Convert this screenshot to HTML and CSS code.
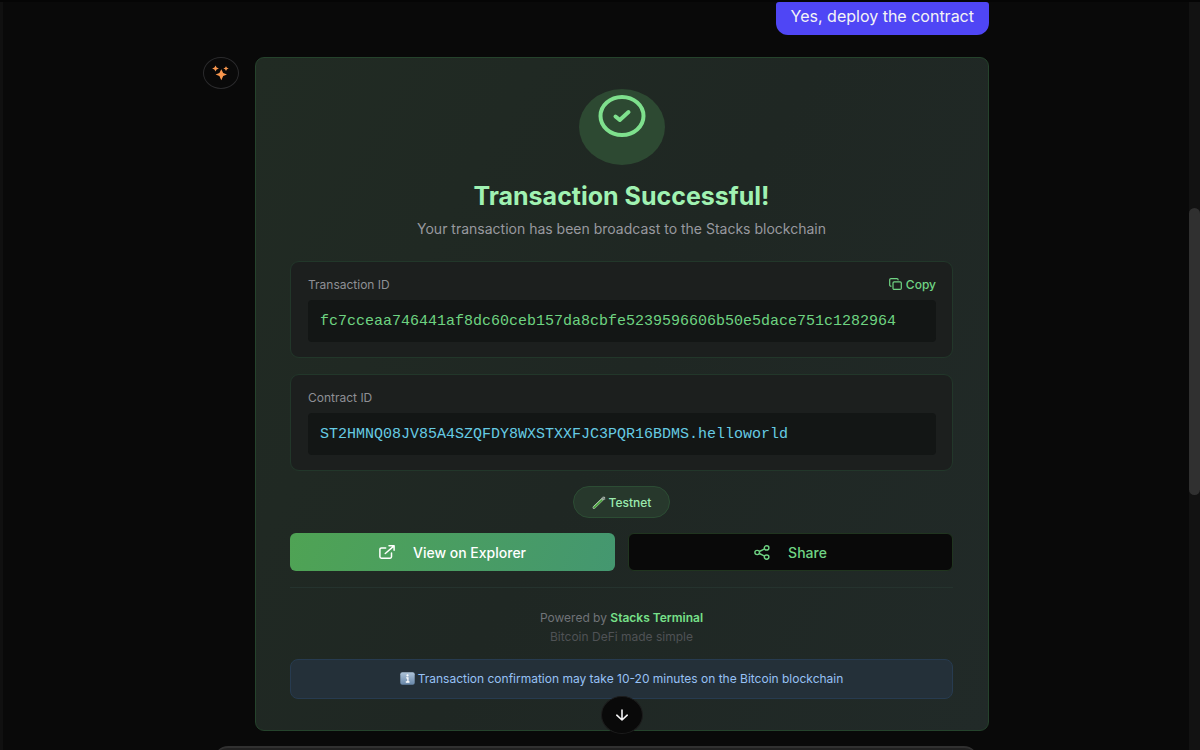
FILE: index.html
```html
<!DOCTYPE html>
<html lang="en">
<head>
<meta charset="utf-8">
<meta name="viewport" content="width=device-width, initial-scale=1">
<title>Stacks Terminal</title>
<link rel="stylesheet" href="styles.css">
</head>
<body>
<div class="app">
  <div class="edge"></div>
  <main class="chat">
    <div class="thread">
      <div class="message-user">Yes, deploy the contract</div>
      <div class="message-assistant">
        <div class="avatar">
          <svg width="18" height="16" viewBox="0 0 18 16" fill="#f9974e" aria-hidden="true">
            <path d="M9.300 4.200 11.200 8 15 9.500 11.200 11 9.300 15.200 7.400 11 3.600 9.500 7.400 8Z"/>
            <path d="M3.500.6 4.600 2.500 6.900 3.500 4.600 4.500 3.500 6.500 2.400 4.500.1 3.500 2.400 2.500Z"/>
            <path d="M14 1.200 14.900 2.700 16.700 3.500 14.900 4.300 14 5.900 13.100 4.300 11.300 3.500 13.100 2.700Z"/>
          </svg>
        </div>
        <section class="card">
          <div class="success-mark">
            <svg width="48" height="42" viewBox="0 0 48 42" fill="none" stroke="#7ee08d" stroke-width="4" stroke-linecap="round" stroke-linejoin="round" aria-hidden="true">
              <ellipse cx="24" cy="21" rx="21.500" ry="19"/>
              <path d="m17.500 21.500 4.300 3.500 8.700-8"/>
            </svg>
          </div>
          <h1 class="title">Transaction Successful!</h1>
          <p class="subtitle">Your transaction has been broadcast to the Stacks blockchain</p>

          <div class="fields">
            <div class="field">
              <div class="field-head">
                <span class="field-label">Transaction ID</span>
                <button class="copy" type="button">
                  <svg width="13" height="12" viewBox="0 0 13 12" fill="none" stroke="currentColor" stroke-width="1.200" stroke-linejoin="round" stroke-linecap="round" aria-hidden="true">
                    <rect x="4" y="3.800" width="8.300" height="7.600" rx="1.200"/>
                    <path d="M2 8.200C1.200 8.200.7 7.700.7 7V1.800C.7 1.100 1.200.6 2 .6h5.900c.7 0 1.200.5 1.200 1.200"/>
                  </svg>
                  Copy
                </button>
              </div>
              <code class="value value-tx">fc7cceaa746441af8dc60ceb157da8cbfe5239596606b50e5dace751c1282964</code>
            </div>

            <div class="field">
              <div class="field-head"><span class="field-label">Contract ID</span></div>
              <code class="value value-contract">ST2HMNQ08JV85A4SZQFDY8WXSTXXFJC3PQR16BDMS.helloworld</code>
            </div>
          </div>

          <div class="network">
            <svg width="14" height="13" viewBox="0 0 14 13" fill="none" stroke-linecap="round" aria-hidden="true">
              <path d="M2 11.500 11.800 2" stroke="#a9b5ad" stroke-width="2.800"/>
              <path d="M2.200 11.300 9.600 4.200" stroke="#49a53b" stroke-width="1.900"/>
              <path d="M10.300 1.300 12.700 3.300" stroke="#7b8880" stroke-width="1.200"/>
              <path d="M1.800 10.300 9.500 3" stroke="#d5e2d6" stroke-width=".6"/>
            </svg>
            Testnet
          </div>

          <div class="actions">
            <a class="action action-primary" href="#explorer">
              <svg width="16" height="14" viewBox="0 0 16 14" fill="none" stroke="currentColor" stroke-width="1.500" stroke-linecap="round" stroke-linejoin="round" aria-hidden="true">
                <path d="M12.500 8v3.800c0 .8-.6 1.400-1.400 1.400H2.400c-.9 0-1.500-.6-1.500-1.400V4.400C.9 3.600 1.500 3 2.400 3h4.300M10 .8h5.100v4.500M6.300 8.500 15 .9"/>
              </svg>
              View on Explorer
            </a>
            <button class="action action-secondary" type="button">
              <svg width="16" height="15" viewBox="0 0 16 15" fill="none" stroke="currentColor" stroke-width="1.400" aria-hidden="true">
                <ellipse cx="12.600" cy="2.900" rx="2.300" ry="2.100"/>
                <ellipse cx="3.200" cy="7.500" rx="2.300" ry="2.100"/>
                <ellipse cx="12.600" cy="12.100" rx="2.300" ry="2.100"/>
                <path d="m5.300 6.500 5.300-2.600M5.300 8.500l5.300 2.600"/>
              </svg>
              Share
            </button>
          </div>

          <footer class="credits">
            <p class="powered">Powered by <strong>Stacks Terminal</strong></p>
            <p class="tagline">Bitcoin DeFi made simple</p>
          </footer>

          <div class="notice">
            <svg width="15" height="13" viewBox="0 0 15 13" aria-hidden="true">
              <defs><linearGradient id="tile" x1="0" y1="0" x2="0" y2="1"><stop stop-color="#afc4d9"/><stop offset="1" stop-color="#6685a7"/></linearGradient></defs>
              <rect x=".3" y=".2" width="14.400" height="12.600" rx="2" fill="url(#tile)"/>
              <circle cx="7.500" cy="3.400" r="1.100" fill="#fff"/>
              <path d="M6.200 5.800h1.700v4M5.800 10h3.700" fill="none" stroke="#fff" stroke-width="1.300"/>
            </svg>
            Transaction confirmation may take 10-20 minutes on the Bitcoin blockchain
          </div>

          <button class="scroll-down" type="button" aria-label="Scroll to bottom">
            <svg width="14" height="12" viewBox="0 0 14 12" fill="none" stroke="currentColor" stroke-width="1.600" stroke-linecap="round" stroke-linejoin="round" aria-hidden="true">
              <path d="M7 1v10M1.800 6.200 7 11l5.200-4.800"/>
            </svg>
          </button>
        </section>
      </div>
      <div class="composer"></div>
    </div>
  </main>
  <div class="scrollbar"><div class="thumb"></div></div>
</div>
</body>
</html>
```
FILE: styles.css
```css
* { box-sizing: border-box; }

body {
  margin: 0;
  background: #090909;
  color: #f4f4f5;
  font-family: Inter, "Liberation Sans", sans-serif;
}

h1, p { margin: 0; font-weight: 400; }
svg { display: block; flex: none; }
button { font: inherit; cursor: pointer; }

.app {
  display: flex;
  height: 100vh;
  overflow: hidden;
  border-top: 2px solid #050505;
}
.edge { width: 3px; background: #101010; }
.chat { flex: 1; min-width: 0; overflow: hidden; }

.thread {
  display: flex;
  flex-direction: column;
  max-width: 786px;
  margin: 0 auto;
}

.message-user {
  align-self: flex-end;
  padding: 4px 15px 9px;
  border-radius: 3px 3px 12px 12px;
  background: #4f46f5;
  font-size: 16px;
  line-height: 20px;
}

.message-assistant {
  display: flex;
  align-items: flex-start;
  gap: 16px;
  margin-top: 22px;
}

.avatar {
  display: grid;
  place-items: center;
  flex: none;
  width: 36px;
  height: 32px;
  border: 1px solid #2b2b2d;
  border-radius: 50%;
}

.card {
  position: relative;
  flex: 1;
  min-width: 0;
  display: flex;
  flex-direction: column;
  padding: 31px 35px 31px 34px;
  border: 1px solid #25432c;
  border-radius: 9px;
  background: linear-gradient(120deg, #212b23, #1f2723 50%, #212a28);
}

.success-mark {
  align-self: center;
  width: 86px;
  height: 76px;
  padding-top: 6px;
  border-radius: 50%;
  background: #2d4932;
}
.success-mark svg { margin: 0 auto; }

.title {
  margin-top: 16px;
  color: #a0f2b2;
  font-size: 25px;
  font-weight: 700;
  line-height: 30px;
  text-align: center;
}
.subtitle {
  margin: 8px 0 22px;
  color: #98999f;
  font-size: 14px;
  line-height: 20px;
  text-align: center;
}

.fields {
  display: flex;
  flex-direction: column;
  gap: 16px;
  margin-bottom: 15px;
}
.field {
  padding: 13px 16px 15px 17px;
  border: 1px solid #22372a;
  border-radius: 9px;
  background: #1c1f1e;
}
.field-head {
  display: flex;
  justify-content: space-between;
  align-items: center;
  height: 18px;
  margin-bottom: 7px;
  color: #8e8f95;
  font-size: 12px;
}
.copy {
  display: flex;
  align-items: center;
  gap: 4px;
  padding: 0;
  border: 0;
  background: none;
  color: #70d484;
  font-weight: 500;
}
.value {
  display: block;
  padding: 12px 12px 10px;
  border-radius: 4px;
  background: #131615;
  font-family: "Liberation Mono", monospace;
  font-size: 15px;
  line-height: 20px;
  overflow-wrap: anywhere;
}
.value-tx { color: #6ed381; }
.value-contract { color: #66cbe3; }

.network {
  align-self: center;
  display: flex;
  align-items: center;
  gap: 3px;
  height: 32px;
  padding: 0 18px;
  border: 1px solid #2c4d34;
  border-radius: 16px;
  background: #27382c;
  color: #9beaae;
  font-size: 12px;
  font-weight: 500;
}

.actions {
  display: grid;
  grid-template-columns: 1fr 1fr;
  gap: 13px;
  margin-top: 15px;
}
.action {
  display: flex;
  align-items: center;
  justify-content: center;
  gap: 18px;
  height: 38px;
  border: 0;
  border-radius: 6px;
  font-size: 14px;
  font-weight: 500;
  text-decoration: none;
}
.action-primary {
  background: linear-gradient(110deg, #4fa354, #449770);
  color: #fff;
}
.action-secondary {
  border: 1px solid #20351f;
  background: #090909;
  color: #70d484;
}

.credits {
  margin-top: 16px;
  padding-top: 20px;
  border-top: 1px solid #25332e;
  font-size: 12px;
  line-height: 19px;
  text-align: center;
}
.powered { color: #707378; }
.powered strong { color: #77e089; font-weight: 600; }
.tagline { color: #4f5255; }

.notice {
  display: flex;
  align-items: center;
  justify-content: center;
  gap: 3px;
  min-height: 40px;
  padding-bottom: 2px;
  margin-top: 13px;
  border: 1px solid #273b50;
  border-radius: 8px;
  background: #243039;
  color: #97c1f5;
  font-size: 12px;
}

.scroll-down {
  position: absolute;
  bottom: -4px;
  left: 50%;
  display: grid;
  place-items: center;
  width: 42px;
  height: 38px;
  padding: 0;
  transform: translateX(-50%);
  border: 1px solid #1c1c1c;
  border-radius: 50%;
  background: #090909;
  color: #f4f4f5;
}

.composer {
  height: 40px;
  margin: 15px 11px 0;
  border-top: 2px solid #303030;
  border-radius: 14px;
  background: #202020;
}

.scrollbar {
  width: 11px;
  padding-top: 206px;
  background: #121212;
}
.thumb {
  height: 287px;
  border-radius: 6px;
  background: #303030;
}
```
